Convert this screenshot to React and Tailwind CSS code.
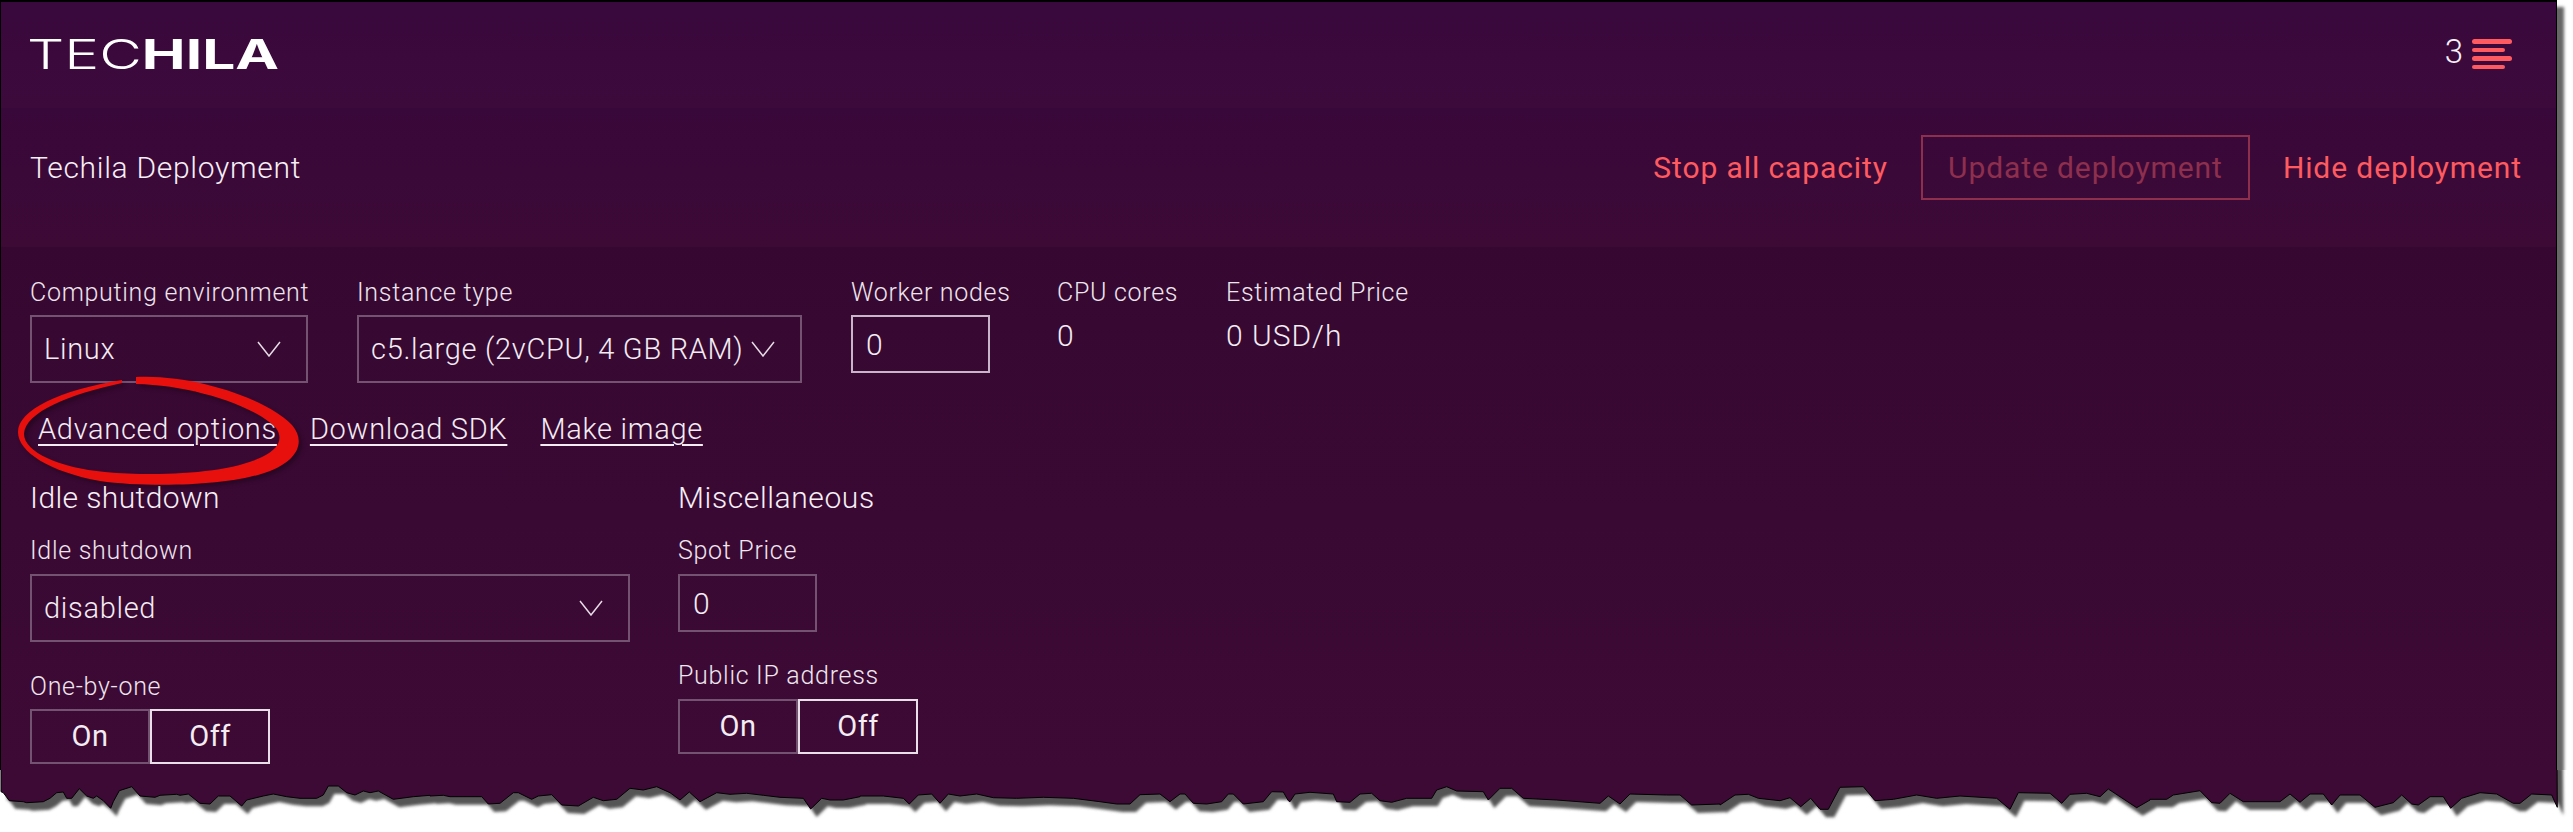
const edgeStrips = [
  [0, [3,65,10,68,28,92,70,95,80,98,130,95,150,85,170,68,190,66,200,85,215,85,238,56,260,78,280,85,290,78,310,92,332,115,340,95,358,62,395,50,420,78,465,82,480,76,530,73,540,76,565,72,600,100,630,102,655,78,690,78,725,108,740,90,790,78,820,72,860,80,900,85,950,85,970,75,985,48,1015,48,1040,68,1065,75,1090,63,1110,68,1135,63,1180,88,1240,80,1290,76]],
  [430, [0,78,40,76,60,80,155,80,175,102,210,100,250,68,265,68,305,88,325,78,365,74,395,105,445,108,490,82,520,92,560,88,600,55,640,60,680,50,720,68,750,90,778,66,810,95,860,68,900,73,950,70,1000,76,1050,82,1120,85,1142,117,1175,85,1200,90,1240,90,1290,80]],
  [860, [0,78,70,78,130,85,148,102,175,75,215,72,240,100,265,72,300,78,350,72,400,83,470,85,550,82,640,85,720,95,770,102,810,102,840,74,900,72,930,95,960,72,975,72,1000,100,1040,102,1085,95,1105,72,1120,72,1150,102,1210,95,1235,65,1270,66,1285,92]],
  [1290, [0,95,15,72,60,67,130,72,140,95,180,97,210,72,245,70,270,92,305,97,350,85,425,85,440,60,470,50,500,63,580,65,595,90,630,55,665,55,700,85,800,90,930,100,955,78,990,102,1020,72,1130,75,1170,75,1205,105,1290,102]],
  [1720, [0,105,45,75,85,73,115,85,180,92,210,83,242,110,272,85,300,118,325,118,360,52,430,50,465,92,520,88,590,75,650,85,720,78,830,85,870,118,895,68,990,70,1025,100,1050,73,1100,70,1140,80,1165,57,1250,113,1290,90]],
  [2150, [0,88,50,88,70,75,150,62,185,98,210,100,240,70,280,95,390,95,420,72,450,97,480,72,520,72,545,105,570,75,630,75,675,112,730,98,755,75,785,102,805,105,840,80,880,80,902,115,935,85,990,68,1040,72,1090,100,1110,100,1145,72,1205,75,1222,112]],
];

// strip coordinates are 3x zoom crops, y measured from 770
const edgePoints = edgeStrips
  .flatMap(([left, pts]) => {
    const out = [];
    for (let i = 0; i < pts.length; i += 2) {
      out.push(`${(left + pts[i] / 3).toFixed(1)},${(pts[i + 1] / 3).toFixed(1)}`);
    }
    return out;
  })
  .join(' ');
const tornShape = `1,-10 ${edgePoints} 2557,-10`;

function TornEdge() {
  return (
    <svg className="absolute left-0 top-[770px]" width="2573" height="62" viewBox="0 0 2573 62">
      <defs>
        <filter id="tornBlur" x="-1%" y="-30%" width="102%" height="160%">
          <feGaussianBlur stdDeviation="1.6" />
        </filter>
      </defs>
      <rect x="0" y="0" width="2573" height="62" fill="#ffffff" />
      <polygon points={tornShape} fill="#555555" filter="url(#tornBlur)" transform="translate(6 8)" />
      <polygon points={tornShape} fill="#3d0a35" stroke="#000000" strokeWidth="1" />
    </svg>
  );
}

function RedCircle() {
  return (
    <svg className="absolute left-0 top-[360px] drop-shadow-[3px_3px_2px_rgba(0,0,0,0.3)]" width="320" height="140" viewBox="0 360 320 140">
      <path
        d="M136 377 C192 374 266 398 292 425 C305 440 300 459 270 471 C232 486 150 488 100 481 C50 472 18 452 18 432 C18 410 60 390 122 380 L122 383 C70 394 25 412 24 434 C24 452 60 468 105 472 C160 477 230 473 262 457 C280 448 283 438 276 428 C254 405 190 385 136 384 Z"
        fill="#e8100c"
      />
    </svg>
  );
}

function Chevron() {
  return (
    <svg width="24" height="16" viewBox="0 0 24 16" fill="none" stroke="#e6dbe6" strokeWidth="1.5">
      <polyline points="1,1 12,15 23,1" />
    </svg>
  );
}

function Label({ children }) {
  return <div className="h-[32px] mb-[7px] text-[25px] leading-[32px] tracking-[0.7px] text-[#eee5ee] whitespace-nowrap">{children}</div>;
}

function Select({ value, className }) {
  return (
    <div className={`h-[68px] border-2 border-[#745272] flex items-center justify-between pl-[12px] pr-[25px] text-[29px] tracking-[0.7px] text-[#f3ecf3] whitespace-nowrap ${className}`}>
      <span className="pt-[1px]">{value}</span>
      <Chevron />
    </div>
  );
}

function Toggle() {
  return (
    <div className="flex text-[29px] tracking-[0.5px] font-normal text-[#f3ecf3]">
      <div className="w-[120px] h-[55px] pt-[1px] border-2 border-[#745272] flex items-center justify-center">On</div>
      <div className="w-[120px] h-[55px] pt-[1px] border-2 border-[#e8dfe8] flex items-center justify-center">Off</div>
    </div>
  );
}

function App() {
  return (
    <div className="relative w-[2573px] h-[832px] overflow-hidden bg-white font-['Roboto',sans-serif] font-light">
      <div className="w-[2557px] h-[800px] border-t-2 border-x border-black shadow-[7px_7px_3px_#666666] flex flex-col">
        {/* Barra superior */}
        <div className="h-[106px] shrink-0 bg-gradient-to-b from-[#39083c] to-[#3d0a3c] flex items-center justify-between pl-[26px] pr-[44px]">
          <div className="origin-left scale-x-[1.43] -mt-[2px] font-['Inter',sans-serif] text-[41px] leading-[30px] text-white whitespace-nowrap">
            <span className="font-light">TEC</span><span className="font-bold">HILA</span>
          </div>
          <div className="flex items-center gap-[9px] -mt-[2px]">
            <span className="text-[33px] leading-[30px] -mt-[4px] text-[#f8f2f8]">3</span>
            <div className="flex flex-col gap-[4px]">
              <div className="w-[40px] h-[5px] rounded-full bg-[#ff5a5f]"></div>
              <div className="w-[33px] h-[4px] rounded-full bg-[#ff5a5f]"></div>
              <div className="w-[40px] h-[5px] rounded-full bg-[#ff5a5f]"></div>
              <div className="w-[33px] h-[4px] rounded-full bg-[#ff5a5f]"></div>
            </div>
          </div>
        </div>

        {/* Encabezado del despliegue */}
        <div className="h-[139px] shrink-0 bg-gradient-to-b from-[#39083a] to-[#3d0a36] flex items-center justify-between pl-[29px] pr-[34px] pb-[20px] text-[30px] tracking-[0.9px]">
          <span className="text-[#f6eff6] tracking-[0.7px]">Techila Deployment</span>
          <div className="flex items-center gap-[33px] font-normal text-[#ff5a5f]">
            <span>Stop all capacity</span>
            <div className="h-[65px] w-[329px] border-2 border-[#8e2f4e] text-[#8e2f4e] flex items-center justify-center">Update deployment</div>
            <span>Hide deployment</span>
          </div>
        </div>

        {/* Formulario */}
        <div className="flex-1 bg-gradient-to-b from-[#360831] to-[#3d0a35] pl-[29px] pt-[30px]">
          <div className="flex gap-[49px] items-start">
            <div className="w-[278px]">
              <Label>Computing environment</Label>
              <Select value="Linux" className="w-[278px] -mt-[1px]" />
            </div>
            <div className="w-[445px]">
              <Label>Instance type</Label>
              <Select value="c5.large (2vCPU, 4 GB RAM)" className="w-[445px] -mt-[1px]" />
            </div>
            <div className="w-[157px]">
              <Label>Worker nodes</Label>
              <div className="w-[139px] h-[58px] -mt-[1px] border-2 border-[#c9b5c9] flex items-center pl-[13px] text-[30px] text-[#f3ecf3]">0</div>
            </div>
            <div className="w-[121px]">
              <Label>CPU cores</Label>
              <div className="text-[30px] leading-[40px] mt-[3px] text-[#f3ecf3]">0</div>
            </div>
            <div className="-ml-[1px]">
              <Label>Estimated Price</Label>
              <div className="text-[30px] leading-[40px] mt-[3px] tracking-[1px] text-[#f3ecf3]">0 USD/h</div>
            </div>
          </div>

          <div className="flex gap-[33px] mt-[27px] ml-[8px] h-[40px] items-center text-[29px] tracking-[0.7px] text-[#f3ecf3] underline underline-offset-[5px] decoration-2">
            <span>Advanced options</span>
            <span>Download SDK</span>
            <span>Make image</span>
          </div>

          <div className="flex gap-[48px] mt-[28px]">
            <div className="w-[600px]">
              <div className="h-[40px] mb-[17px] text-[30px] leading-[40px] tracking-[0.4px] text-[#f6eff6]">Idle shutdown</div>
              <Label>Idle shutdown</Label>
              <Select value="disabled" className="w-[600px]" />
              <div className="mt-[29px]">
                <Label>One-by-one</Label>
                <div className="-mt-[1px]"><Toggle /></div>
              </div>
            </div>
            <div>
              <div className="h-[40px] mb-[17px] text-[30px] leading-[40px] tracking-[0.6px] text-[#f6eff6]">Miscellaneous</div>
              <Label>Spot Price</Label>
              <div className="w-[139px] h-[58px] border-2 border-[#745272] flex items-center pl-[13px] text-[30px] text-[#f3ecf3]">0</div>
              <div className="mt-[28px]">
                <Label>Public IP address</Label>
                <Toggle />
              </div>
            </div>
          </div>
        </div>
      </div>

      <RedCircle />
      <TornEdge />
    </div>
  );
}

export default App;
